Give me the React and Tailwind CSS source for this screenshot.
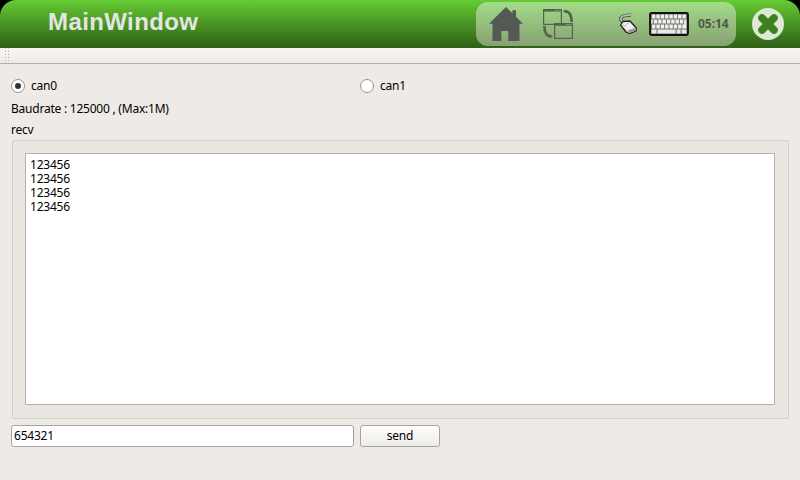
import React from "react";

const messages = ["123456", "123456", "123456", "123456"];

function HomeIcon() {
  return (
    <svg width="34" height="34" viewBox="0 0 34 34" fill="#535954">
      <path d="M17 0L23.5 6.3V3.2H27V9.7L34 16.8H30.5V34H19.3V24H12.3V34H3.5V16.8H0Z" />
    </svg>
  );
}

function SwitchIcon() {
  return (
    <svg width="30" height="30" viewBox="0 0 30 30" fill="none" stroke="#536250" strokeWidth="1.2">
      <rect x="0.6" y="0.6" width="17.8" height="14.8" />
      <path d="M0 1.3H19" strokeWidth="2.6" />
      <path d="M12 1.3H13.5M14.5 1.3H16M17 1.3H18" strokeWidth="1" stroke="#93b981" />
      <rect x="11.6" y="14.6" width="17.8" height="14.8" />
      <path d="M11 15.5H30" strokeWidth="2.6" />
      <path d="M23 15.5H24.5M25.5 15.5H27M28 15.5H29" strokeWidth="1" stroke="#8eaa7f" />
      <path d="M21.5 2.3C26 2 28.6 5.5 28.6 13" strokeWidth="2.6" />
      <path d="M20 2.3L23.5 .5V4.2Z" fill="#536250" stroke="none" />
      <path d="M1.4 17C1.4 23.5 3.5 27.3 8 27.3" strokeWidth="2.6" />
      <path d="M10 27.5L6.5 25V29.2Z" fill="#536250" stroke="none" />
    </svg>
  );
}

function MouseIcon() {
  return (
    <svg width="20" height="25" viewBox="0 0 20 25">
      <path d="M13 6.2C9.5 5.6 8.5 7.2 5 7.2C2 8.2 2 10.5 4.5 13" fill="none" stroke="#444742" strokeWidth="3.2" />
      <path d="M13 6C9.5 5.4 8.5 7 5 7C2 8 2 10.3 4.5 12.8" fill="none" stroke="#c0c5bd" strokeWidth="1.6" />
      <path d="M2.6 16L5 12.5L12 12L18.2 19V22L11.5 24.5L8 23Z" fill="#ededed" stroke="#222" strokeWidth="1.3" strokeLinejoin="round" />
      <path d="M10.5 23.7L10.2 21L17.5 19V21.7L12 23.8Z" fill="#999" />
      <path d="M3.5 15.7L7 17L11.8 12.7M4.5 17.5L10 23" fill="none" stroke="#aaa" strokeWidth=".8" />
    </svg>
  );
}

const keyRows = [
  { x: 3, y: 2.5, count: 8 },
  { x: 4.8, y: 7.5, count: 7 },
  { x: 3, y: 12.5, count: 7 },
];

function KeyboardIcon() {
  return (
    <svg width="40" height="24" viewBox="0 0 40 24">
      <rect x="1" y="1" width="38" height="22" rx="1.5" fill="#77756f" stroke="#111" strokeWidth="1.8" />
      {keyRows.map(({ x, y, count }) =>
        Array.from({ length: count }, (_, i) => (
          <rect key={y + "-" + i} x={x + i * 4.35} y={y} width="3.4" height="4" fill="#f0eeee" />
        ))
      )}
      <path d="M2.2 7.5H3.8V11.5H2.2ZM35.2 7.5H37.4V16.5H33.3V12.5H35.2Z" fill="#f0eeee" />
      <path d="M2.5 17.6H7.5V21.4H2.5ZM8.5 17.6H26.5V21.4H8.5ZM27.6 17.6H31.6V21.4H27.6ZM32.7 17.6H37.4V21.4H32.7Z" fill="#eae8e8" />
    </svg>
  );
}

function CloseIcon() {
  return (
    <svg width="32" height="32" viewBox="0 0 32 32">
      <circle cx="16" cy="16" r="16" fill="#dcead3" />
      <path d="M10 10L22 22M22 10L10 22" stroke="#3f7f1e" strokeWidth="7.6" strokeLinecap="round" />
    </svg>
  );
}

function Radio({ label, checked }) {
  return (
    <div className="flex h-[14px] items-center gap-[6px]">
      <span className="flex size-[14px] items-center justify-center rounded-full border border-[#96938f] bg-white">
        {checked && <span className="size-[6px] rounded-full bg-[#333]" />}
      </span>
      <span>{label}</span>
    </div>
  );
}

export default function App() {
  return (
    <div className="flex h-[480px] w-[800px] flex-col overflow-hidden bg-[#eeebe7] font-['Noto_Sans',sans-serif] text-[12px] leading-[14px] tracking-[-0.23px] text-black">
      <header className="h-12 bg-black">
        <div className="flex h-full rounded-t-[16px] bg-linear-to-b from-[#65cc33] to-[#2f6017]">
          <h1 className="w-[476px] pt-[8px] pl-[48px] font-['Liberation_Sans',sans-serif] text-[24px] leading-[28px] font-bold tracking-[0.4px] text-[#e3e6e1]">
            MainWindow
          </h1>
          <div className="mt-[2px] flex h-[44px] w-[260px] rounded-[12px] bg-linear-to-b from-[#a4dc88] to-[#86a173]">
            <div className="pt-[5px] pl-[13px]"><HomeIcon /></div>
            <div className="pt-[7px] pl-[20px]"><SwitchIcon /></div>
            <div className="pt-[7px] pl-[45px]"><MouseIcon /></div>
            <div className="pt-[10px] pl-[11px]"><KeyboardIcon /></div>
            <span className="pt-[15px] pl-[9px] text-[12px] leading-[14px] font-bold tracking-[-0.05px] text-[#50584c]">05:14</span>
          </div>
          <div className="pt-[8px] pl-[16px]"><CloseIcon /></div>
        </div>
      </header>

      <div className="h-4 shrink-0 border-b border-[#b3afab] bg-linear-to-b from-[#f7f4f2] to-[#eeebe7] pl-[5px]">
        <svg width="5" height="15" viewBox="0 0 5 15" stroke="#b9b6b3" strokeDasharray="1 2">
          <path d="M.5 0V15M3.5 0V15" />
        </svg>
      </div>

      <main className="flex flex-col pt-[15px] pl-[11px]">
        <div className="grid grid-cols-[349px_auto]">
          <Radio label="can0" checked />
          <Radio label="can1" />
        </div>
        <p className="mt-[9px]">Baudrate : 125000 , (Max:1M)</p>
        <p className="mt-[7px]">recv</p>
        <div className="mt-[3px] ml-px h-[279px] w-[777px] rounded-[2px] border border-[#d3d0cd] bg-[#eae7e3] p-[12px]">
          <div className="h-[252px] w-[750px] border border-[#b3b0ad] bg-white px-[4px] pt-[4px] whitespace-pre-line">
            {messages.join("\n")}
          </div>
        </div>
        <div className="mt-[6px] flex gap-[6px]">
          <div className="h-[22px] w-[343px] rounded-[3px] border border-[#a5a29f] bg-white pt-[3px] pl-[2px]">654321</div>
          <button className="h-[22px] w-[80px] rounded-[3px] border border-[#a5a29f] bg-linear-to-b from-white to-[#edebe8] text-center">
            send
          </button>
        </div>
      </main>
    </div>
  );
}
